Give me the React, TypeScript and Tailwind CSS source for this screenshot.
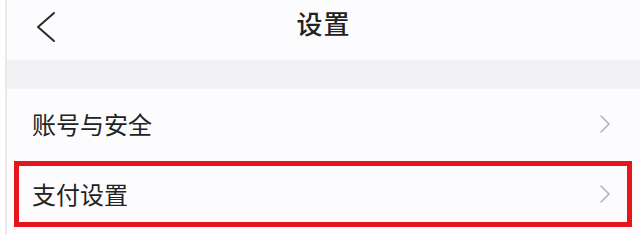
const rows = [
  { id: "account", label: "账号与安全", highlighted: false },
  { id: "payment", label: "支付设置", highlighted: true },
];

const BackIcon = () => (
  <svg width="20" height="32" viewBox="0 0 20 32" fill="none">
    <polyline
      points="18,2 2,16 18,30"
      stroke="#2a2a2a"
      strokeWidth="2"
      strokeLinecap="round"
      strokeLinejoin="round"
    />
  </svg>
);

const RowArrow = () => (
  <svg width="12" height="20" viewBox="0 0 12 20" fill="none">
    <polyline
      points="2,2 10,10 2,18"
      stroke="#b3b3b6"
      strokeWidth="1.6"
      strokeLinecap="round"
      strokeLinejoin="round"
    />
  </svg>
);

export default function App() {
  return (
    <div
      className="flex h-[234px] w-[640px] overflow-hidden bg-white text-[#222]"
      style={{ fontFamily: '"Noto Sans CJK SC", "Noto Sans", sans-serif' }}
    >
      {/* left edge strip */}
      <div className="w-[5px] shrink-0 bg-white" />
      <div className="w-[2px] shrink-0 bg-[#e9e8ec]" />

      <div className="flex min-w-0 flex-1 flex-col bg-[#fcfbfd]">
        {/* Header */}
        <header className="relative flex h-[60px] shrink-0 items-center justify-center pb-[15px]">
          <button className="absolute left-[29px] top-[11px]">
            <BackIcon />
          </button>
          <h1 className="text-[26px] font-medium leading-none tracking-[1px]">设置</h1>
        </header>

        {/* Section gap */}
        <div className="h-[29px] shrink-0 bg-[#f2f1f4]" />

        {/* Rows */}
        {rows.map((row) => (
          <div
            key={row.id}
            className="relative flex h-[70px] shrink-0 items-center justify-between pl-[25px] pr-[29px]"
          >
            <span className="text-[24px] leading-none">{row.label}</span>
            <RowArrow />
            {row.highlighted && (
              <div className="pointer-events-none absolute bottom-[2px] left-[7px] right-[8px] top-[2px] border-[5px] border-[#e8141b]" />
            )}
          </div>
        ))}
      </div>
    </div>
  );
}
